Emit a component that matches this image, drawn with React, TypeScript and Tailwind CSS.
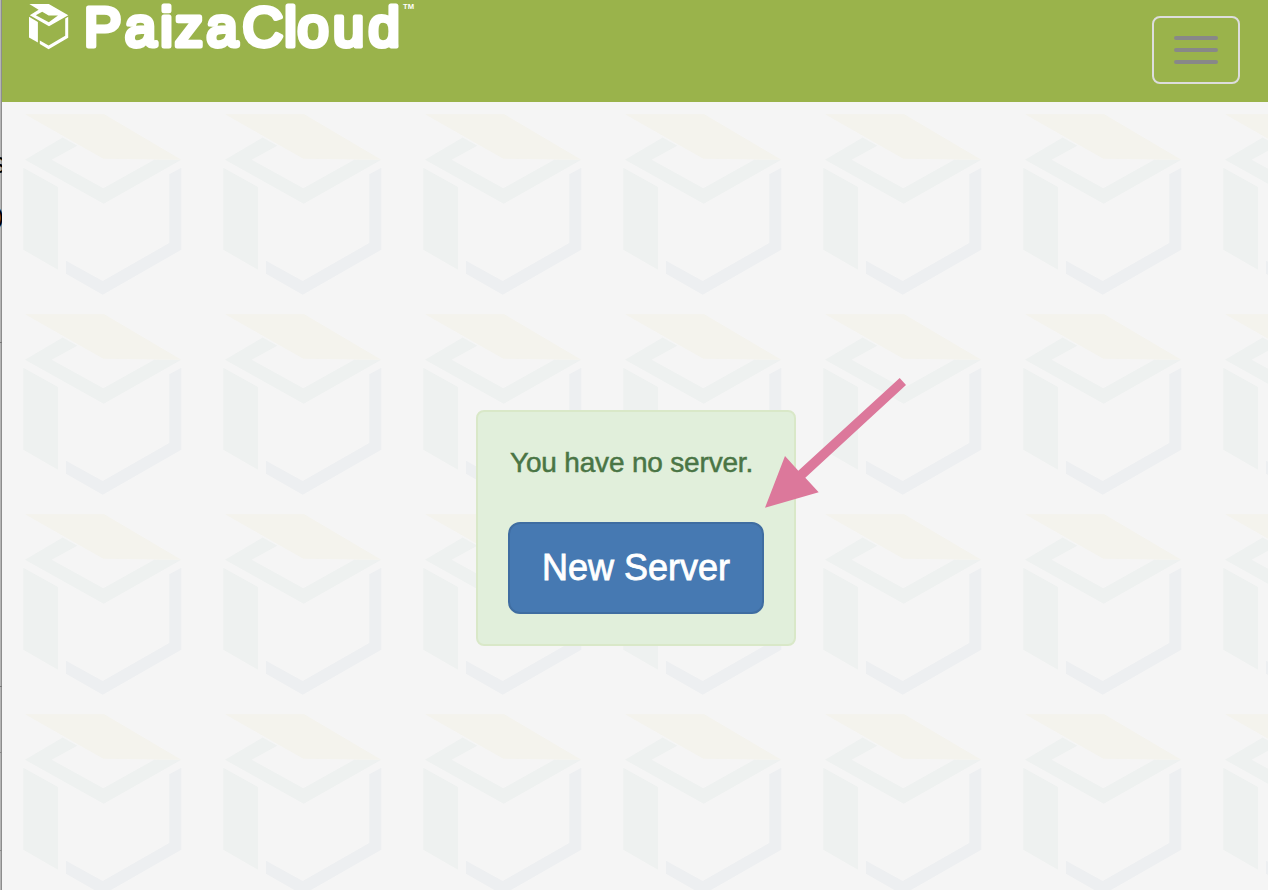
function BoxPattern() {
  return (
    <svg className="absolute inset-0 h-full w-full" aria-hidden="true">
      <defs>
        <pattern id="boxes" width="200" height="200" patternUnits="userSpaceOnUse">
          <path fill="#eef1f0" d="M60.7 35.5 23 57.7 101.7 101.7 179.3 57.7H152.3L101.3 86.3 49.7 57.7 75.3 43.7z" />
          <path fill="#f4f3ed" d="M23 12.3H102.3L179.3 57.7 101.3 56.8z" />
          <path fill="#eef1f0" d="M21.3 65.7 56 85V167.7L21.3 147.7z" />
          <path fill="#edeff1" d="M179.3 65.7V147.7L100.7 192.7 64 171.7V158.7L100.7 179 167.3 141V72.3z" />
        </pattern>
      </defs>
      <rect width="100%" height="100%" fill="url(#boxes)" />
    </svg>
  );
}

function Logo() {
  return (
    <svg width="420" height="60" viewBox="0 0 420 60" className="block text-white" fill="currentColor">
      <path
        fillRule="evenodd"
        d="M29.3 4H48.8L68.3 15.2 49 26.3 29.8 15.3 38.6 9.8zM35.8 15.3 48.8 22.3 58 15.6H48.6L42.2 11.8z"
      />
      <path d="M29 16.8 37.9 22V42.4L29 37.5z" />
      <path d="M68.2 16.8V37.8L48.6 49.2 39.8 44V40.5L48.6 45.5 65.2 35.8V18.6z" />
      <text
        x="84 125 160.2 175 206.5 242.5 284.2 297.5 333 368.5"
        y="46"
        fontSize="56"
        stroke="currentColor"
        strokeWidth="5"
        strokeLinejoin="round"
        strokeLinecap="round"
        className="font-['Liberation_Sans',sans-serif]"
      >
        PaizaCloud
      </text>
      <text x="403" y="9" fontSize="7" textLength="11" lengthAdjust="spacingAndGlyphs" className="font-['Liberation_Sans',sans-serif] font-bold">
        TM
      </text>
    </svg>
  );
}

function Header() {
  return (
    <header className="flex h-[102px] items-start justify-between bg-[#9ab34b] pr-7">
      <a className="-ml-0.5 block" href="#">
        <Logo />
      </a>
      <button
        aria-label="Menu"
        className="mt-4 flex h-[68px] w-[88px] flex-col items-center justify-center gap-2 rounded-lg border-2 border-[#ddd]"
      >
        <span className="h-1 w-11 rounded-sm bg-[#888]" />
        <span className="h-1 w-11 rounded-sm bg-[#888]" />
        <span className="h-1 w-11 rounded-sm bg-[#888]" />
      </button>
    </header>
  );
}

function WindowEdge() {
  return (
    <div className="relative w-0.5 shrink-0 overflow-hidden bg-[linear-gradient(90deg,#b5b5b5_50%,#8d8d8d_50%)] text-[30px] text-black">
      <span className="absolute -right-1 top-[148px] leading-[30px]">s</span>
      <span className="absolute -right-0.5 top-[201px] text-[24px] leading-[30px]">)</span>
      <span className="absolute left-0 top-[342px] h-px w-0.5 bg-[#777]" />
      <span className="absolute left-0 top-[686px] h-px w-0.5 bg-[#777]" />
      <span className="absolute left-0 top-[752px] h-px w-0.5 bg-[#888]" />
      <span className="absolute left-0 top-[850px] h-px w-0.5 bg-[#888]" />
    </div>
  );
}

function Arrow() {
  return (
    <svg
      className="absolute left-[763px] top-[376px]"
      width="146"
      height="134"
      viewBox="763 376 146 134"
      fill="#dc789b"
      aria-hidden="true"
    >
      <path d="M899.7 378 906 385 805.3 477.7 818.7 492.3 765 507.7 785 456 798.3 470.7z" />
    </svg>
  );
}

export default function App() {
  return (
    <div className="relative flex h-[890px] w-[1268px] overflow-hidden font-['Liberation_Sans',sans-serif]">
      <WindowEdge />
      <div className="flex min-w-0 flex-1 flex-col">
        <Header />
        <main className="relative flex flex-1 items-start justify-center bg-[#f5f5f5] pt-[308px]">
          <BoxPattern />
          <section className="relative ml-0.5 flex h-[236px] w-80 flex-col items-center rounded-lg border-2 border-[#d9e8c8] bg-[#e1efdb] pt-[31px]">
            <p className="ml-8 self-start whitespace-nowrap text-[28px] leading-10 tracking-[-0.18px] text-[#4a7545] [-webkit-text-stroke:0.5px_#4a7545]">
              You have no server.
            </p>
            <button className="mt-[39px] h-[92px] w-64 rounded-xl border-2 border-[#3f6da1] bg-[#4679b2] text-4xl text-white [-webkit-text-stroke:0.8px_white]">
              New Server
            </button>
          </section>
        </main>
      </div>
      <Arrow />
    </div>
  );
}
